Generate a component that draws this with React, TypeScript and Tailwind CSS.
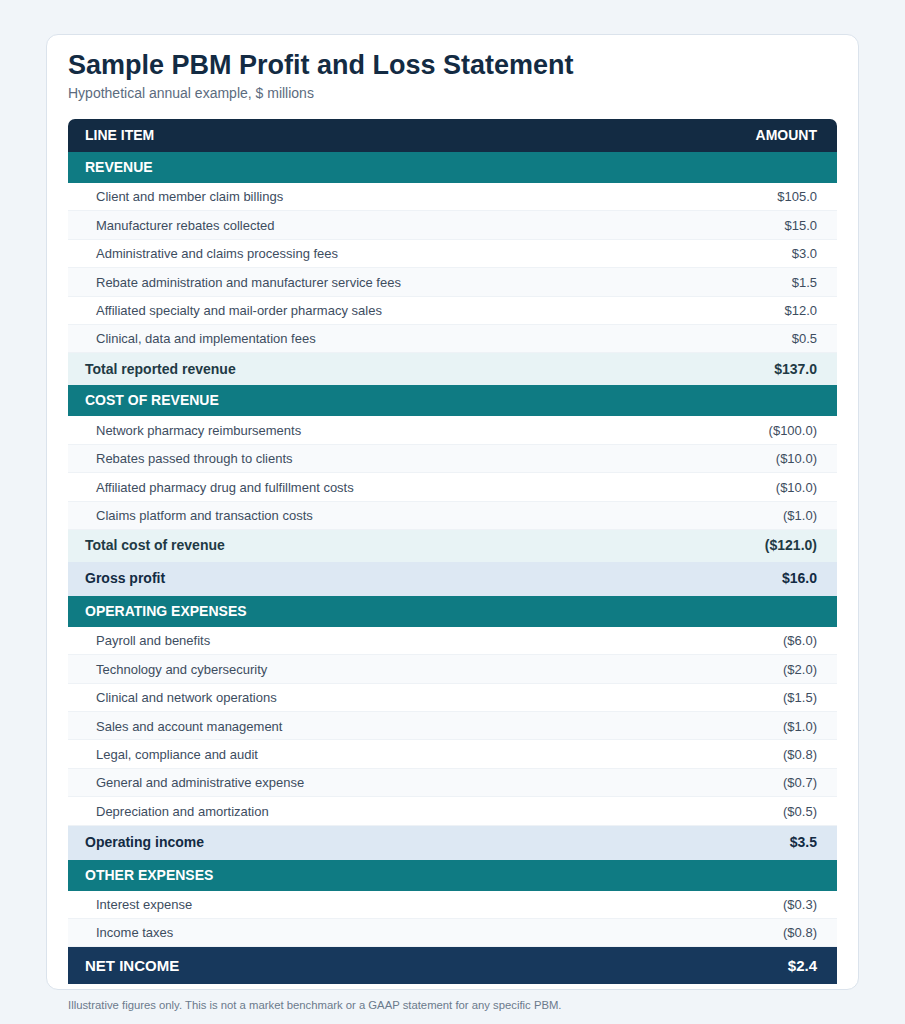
import React from "react";

type Row =
  | { kind: "section"; label: string }
  | { kind: "item"; label: string; amount: string }
  | { kind: "total"; label: string; amount: string }
  | { kind: "key"; label: string; amount: string }
  | { kind: "net"; label: string; amount: string };

const rows: Row[] = [
  { kind: "section", label: "REVENUE" },
  { kind: "item", label: "Client and member claim billings", amount: "$105.0" },
  { kind: "item", label: "Manufacturer rebates collected", amount: "$15.0" },
  { kind: "item", label: "Administrative and claims processing fees", amount: "$3.0" },
  { kind: "item", label: "Rebate administration and manufacturer service fees", amount: "$1.5" },
  { kind: "item", label: "Affiliated specialty and mail-order pharmacy sales", amount: "$12.0" },
  { kind: "item", label: "Clinical, data and implementation fees", amount: "$0.5" },
  { kind: "total", label: "Total reported revenue", amount: "$137.0" },
  { kind: "section", label: "COST OF REVENUE" },
  { kind: "item", label: "Network pharmacy reimbursements", amount: "($100.0)" },
  { kind: "item", label: "Rebates passed through to clients", amount: "($10.0)" },
  { kind: "item", label: "Affiliated pharmacy drug and fulfillment costs", amount: "($10.0)" },
  { kind: "item", label: "Claims platform and transaction costs", amount: "($1.0)" },
  { kind: "total", label: "Total cost of revenue", amount: "($121.0)" },
  { kind: "key", label: "Gross profit", amount: "$16.0" },
  { kind: "section", label: "OPERATING EXPENSES" },
  { kind: "item", label: "Payroll and benefits", amount: "($6.0)" },
  { kind: "item", label: "Technology and cybersecurity", amount: "($2.0)" },
  { kind: "item", label: "Clinical and network operations", amount: "($1.5)" },
  { kind: "item", label: "Sales and account management", amount: "($1.0)" },
  { kind: "item", label: "Legal, compliance and audit", amount: "($0.8)" },
  { kind: "item", label: "General and administrative expense", amount: "($0.7)" },
  { kind: "item", label: "Depreciation and amortization", amount: "($0.5)" },
  { kind: "key", label: "Operating income", amount: "$3.5" },
  { kind: "section", label: "OTHER EXPENSES" },
  { kind: "item", label: "Interest expense", amount: "($0.3)" },
  { kind: "item", label: "Income taxes", amount: "($0.8)" },
  { kind: "net", label: "NET INCOME", amount: "$2.4" },
];

export default function App() {
  let itemIndex = 0;
  return (
    <div
      className="min-h-[1024px] bg-[#f1f5f9] px-[46px] pt-[34px]"
      style={{ fontFamily: '"Liberation Sans", Arial, sans-serif' }}
    >
      <div className="rounded-[12px] border border-[#dbe3ec] bg-white px-[21px] pb-[5px] pt-[13px]">
        <h1 className="text-[27px] font-bold leading-[34px] text-[#132b43]">
          Sample PBM Profit and Loss Statement
        </h1>
        <p className="mt-[1px] text-[14px] leading-[20px] text-[#5b6b7e]">
          Hypothetical annual example, $ millions
        </p>
        <div className="mt-[16px]">
          <div className="flex h-[33px] items-center justify-between rounded-t-[7px] bg-[#132b43] px-[17px] pr-[20px] text-[14px] font-bold text-white">
            <span>LINE ITEM</span>
            <span>AMOUNT</span>
          </div>
          {rows.map((r, i) => {
            if (r.kind === "section") {
              itemIndex = 0;
              return (
                <div
                  key={i}
                  className="flex h-[31px] items-center bg-[#0f7b83] px-[17px] text-[14px] font-bold text-white"
                >
                  {r.label}
                </div>
              );
            }
            if (r.kind === "item") {
              const alt = itemIndex % 2 === 1;
              itemIndex++;
              return (
                <div
                  key={i}
                  className={`flex h-[28.4px] items-center justify-between border-b border-[#eef2f6] pl-[28px] pr-[20px] pt-[1px] text-[13px] text-[#3d4d5f] ${
                    alt ? "bg-[#f8fafc]" : "bg-white"
                  }`}
                >
                  <span>{r.label}</span>
                  <span>{r.amount}</span>
                </div>
              );
            }
            if (r.kind === "total") {
              return (
                <div
                  key={i}
                  className="flex h-[32px] items-center justify-between bg-[#e8f3f5] px-[17px] pr-[20px] text-[14px] font-bold text-[#1f3a45]"
                >
                  <span>{r.label}</span>
                  <span>{r.amount}</span>
                </div>
              );
            }
            if (r.kind === "key") {
              return (
                <div
                  key={i}
                  className="flex h-[34px] items-center justify-between bg-[#dde8f3] px-[17px] pr-[20px] text-[14px] font-bold text-[#132b43]"
                >
                  <span>{r.label}</span>
                  <span>{r.amount}</span>
                </div>
              );
            }
            return (
              <div
                key={i}
                className="flex h-[37px] items-center justify-between bg-[#17385c] px-[17px] pr-[20px] text-[15px] font-bold text-white"
              >
                <span>{r.label}</span>
                <span>{r.amount}</span>
              </div>
            );
          })}
        </div>
      </div>
      <p className="mt-[7px] px-[22px] text-[11.3px] text-[#6b7a8c]">
        Illustrative figures only. This is not a market benchmark or a GAAP statement for any specific PBM.
      </p>
    </div>
  );
}
